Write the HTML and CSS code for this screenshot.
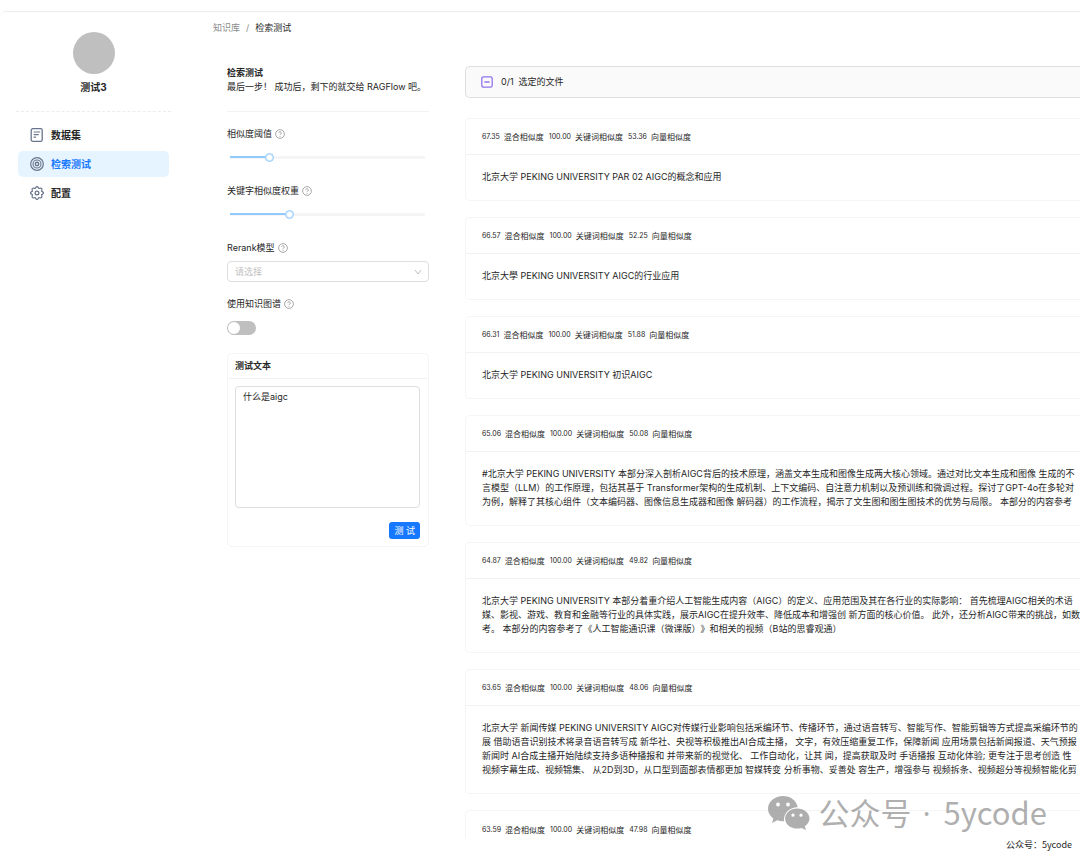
FILE: index.html
```
<!DOCTYPE html>
<html lang="zh-CN">
<head>
    <meta charset="UTF-8">
    <meta name="viewport" content="width=device-width, initial-scale=1.0">
    <title>检索测试 - RAGFlow</title>
    <link rel="stylesheet" href="styles.css">
</head>
<body>
    <svg class="sprite" aria-hidden="true">
        <symbol id="icon-help" viewBox="0 0 16 16">
            <circle cx="8" cy="8" r="7" fill="none" stroke="currentColor" stroke-width="1.2"/>
            <path d="M5.9 6.4a2.1 2 0 1 1 3.2 1.7c-.7.4-1.1.8-1.1 1.5" fill="none" stroke="currentColor" stroke-width="1.2"/>
            <circle cx="8" cy="11.6" r=".8" fill="currentColor"/>
        </symbol>
    </svg>

    <div class="app">
        <div class="topbar"></div>
        <div class="layout">
            <aside class="sidebar">
                <div class="avatar"></div>
                <h2 class="kb-name">测试3</h2>
                <nav class="menu">
                    <a href="#dataset" class="menu-item">
                        <svg viewBox="0 0 14 14" fill="none" stroke="currentColor" stroke-linecap="round">
                            <rect x="1.2" y=".7" width="11" height="12.6" rx="1.6" stroke-width="1.3"/>
                            <path d="M4.1 4h5.6M4.1 6.6h4.2M4.1 9.200h1.400" stroke-width="1.2"/>
                        </svg>
                        数据集
                    </a>
                    <a href="#testing" class="menu-item active">
                        <svg viewBox="0 0 14 14" fill="none" stroke="currentColor">
                            <circle cx="7" cy="7" r="6.3" stroke-width="1.2"/>
                            <circle cx="7" cy="7" r="4" stroke-width="1.1"/>
                            <circle cx="7" cy="7" r="1.700" stroke-width="1.4"/>
                        </svg>
                        检索测试
                    </a>
                    <a href="#config" class="menu-item">
                        <svg viewBox="0 0 14 14" fill="none" stroke="currentColor" stroke-linejoin="round">
                            <path d="M11.530 5.120Q15.400 7 11.530 8.880Q12.940 12.940 8.880 11.530Q7 15.400 5.120 11.530Q1.060 12.940 2.470 8.880Q-1.400 7 2.470 5.120Q1.060 1.060 5.120 2.470Q7-1.400 8.880 2.470Q12.940 1.060 11.530 5.120z" stroke-width="1.2"/>
                            <circle cx="7" cy="7" r="1.900" stroke-width="1.2"/>
                        </svg>
                        配置
                    </a>
                </nav>
            </aside>

            <main class="main">
                <nav class="breadcrumb">
                    <a href="#knowledge">知识库</a>
                    <span class="separator">/</span>
                    <span class="current">检索测试</span>
                </nav>

                <div class="content">
                    <form class="controls">
                        <h1 class="title">检索测试</h1>
                        <p class="intro">最后一步！ 成功后，剩下的就交给 RAGFlow 吧。</p>

                        <div class="form-item slider-item">
                            <label for="similarity">相似度阈值 <svg class="help"><use href="#icon-help"/></svg></label>
                            <input type="range" id="similarity" min="0" max="100" value="20" style="--value: 0.2">
                        </div>
                        <div class="form-item slider-item">
                            <label for="weight">关键字相似度权重 <svg class="help"><use href="#icon-help"/></svg></label>
                            <input type="range" id="weight" min="0" max="100" value="30" style="--value: 0.3">
                        </div>
                        <div class="form-item select-item">
                            <label for="rerank">Rerank模型 <svg class="help"><use href="#icon-help"/></svg></label>
                            <div class="select-box">
                                <select id="rerank">
                                    <option value="">请选择</option>
                                </select>
                                <svg class="arrow" viewBox="0 0 8 8" fill="none" stroke="currentColor"><path d="M1 2l3 4 3-4"/></svg>
                            </div>
                        </div>
                        <div class="form-item switch-item">
                            <label for="graph">使用知识图谱 <svg class="help"><use href="#icon-help"/></svg></label>
                            <input type="checkbox" id="graph" class="switch" role="switch">
                        </div>

                        <div class="test-card">
                            <label for="question" class="test-card-head">测试文本</label>
                            <div class="test-card-body">
                                <textarea id="question">什么是aigc</textarea>
                                <button type="button" class="btn-test">测 试</button>
                            </div>
                        </div>
                    </form>

                    <section class="results">
                        <button type="button" class="file-bar">
                            <svg viewBox="0 0 12 12" fill="none" stroke="currentColor">
                                <rect x=".8" y=".8" width="10.4" height="10.4" rx="1.8" stroke-width="1.3"/>
                                <path d="M3.4 6h5.2" stroke-width="1.3"/>
                            </svg>
                            <span>0/1</span>
                            <span>选定的文件</span>
                        </button>

                        <article class="chunk">
                            <header><b>67.35</b><span>混合相似度</span><b>100.00</b><span>关键词相似度</span><b>53.36</b><span>向量相似度</span></header>
                            <p>北京大学 PEKING UNIVERSITY PAR 02 AIGC的概念和应用</p>
                        </article>
                        <article class="chunk">
                            <header><b>66.57</b><span>混合相似度</span><b>100.00</b><span>关键词相似度</span><b>52.25</b><span>向量相似度</span></header>
                            <p>北京大學 PEKING UNIVERSITY AIGC的行业应用</p>
                        </article>
                        <article class="chunk">
                            <header><b>66.31</b><span>混合相似度</span><b>100.00</b><span>关键词相似度</span><b>51.88</b><span>向量相似度</span></header>
                            <p>北京大学 PEKING UNIVERSITY 初识AIGC</p>
                        </article>
                        <article class="chunk">
                            <header><b>65.06</b><span>混合相似度</span><b>100.00</b><span>关键词相似度</span><b>50.08</b><span>向量相似度</span></header>
                            <p>#北京大学 PEKING UNIVERSITY 本部分深入剖析AIGC背后的技术原理，涵盖文本生成和图像生成两大核心领域。通过对比文本生成和图像 生成的不<br>
                            言模型（LLM）的工作原理，包括其基于 Transformer架构的生成机制、上下文编码、自注意力机制以及预训练和微调过程。探讨了GPT-4o在多轮对<br>
                            为例，解释了其核心组件（文本编码器、图像信息生成器和图像 解码器）的工作流程，揭示了文生图和图生图技术的优势与局限。 本部分的内容参考</p>
                        </article>
                        <article class="chunk">
                            <header><b>64.87</b><span>混合相似度</span><b>100.00</b><span>关键词相似度</span><b>49.82</b><span>向量相似度</span></header>
                            <p>北京大学 PEKING UNIVERSITY 本部分着重介绍人工智能生成内容（AIGC）的定义、应用范围及其在各行业的实际影响： 首先梳理AIGC相关的术语<br>
                            媒、影视、游戏、教育和金融等行业的具体实践，展示AIGC在提升效率、降低成本和增强创 新方面的核心价值。 此外，还分析AIGC带来的挑战，如数<br>
                            考。 本部分的内容参考了《人工智能通识课（微课版）》和相关的视频（B站的思睿观通）</p>
                        </article>
                        <article class="chunk">
                            <header><b>63.65</b><span>混合相似度</span><b>100.00</b><span>关键词相似度</span><b>48.06</b><span>向量相似度</span></header>
                            <p>北京大学 新闻传媒 PEKING UNIVERSITY AIGC对传媒行业影响包括采编环节、传播环节，通过语音转写、智能写作、智能剪辑等方式提高采编环节的<br>
                            展 借助语音识别技术将录音语音转写成 新华社、央视等积极推出AI合成主播， 文字，有效压缩重复工作，保障新闻 应用场景包括新闻报道、天气预报<br>
                            新闻时 AI合成主播开始陆续支持多语种播报和 并带来新的视觉化、 工作自动化，让其 闻，提高获取及时 手语播报 互动化体验; 更专注于思考创造 性<br>
                            视频字幕生成、视频锦集、 从2D到3D，从口型到面部表情都更加 智媒转变 分析事物、妥善处 容生产，增强参与 视频拆条、视频超分等视频智能化剪</p>
                        </article>
                        <article class="chunk">
                            <header><b>63.59</b><span>混合相似度</span><b>100.00</b><span>关键词相似度</span><b>47.98</b><span>向量相似度</span></header>
                        </article>
                    </section>
                </div>
            </main>
        </div>

        <footer class="caption">公众号：5ycode</footer>

        <div class="watermark">
            <svg viewBox="0 0 42 34" fill="currentColor">
                <path fill-rule="evenodd" d="M15 0C6.700 0 0 5.700 0 12.800c0 4 2.100 7.500 5.400 9.800L4 27l5.300-2.700c1.700.6 3.700.9 5.700.9h1.100C15 18 21 11.300 29.700 11.200 28.700 4.800 22.500 0 15 0zM10 6.600a1.900 1.900 0 1 1 0 3.800 1.900 1.900 0 0 1 0-3.800zm10 0a1.900 1.900 0 1 1 0 3.800 1.900 1.900 0 0 1 0-3.800z"/>
                <path fill-rule="evenodd" d="M29.300 12.400c-6.800 0-12.200 4.500-12.200 10.100s5.400 10.100 12.200 10.100c1.500 0 2.900-.2 4.200-.6L38 34l-1.200-3.700c2.800-1.900 4.700-4.700 4.700-7.800 0-5.600-5.400-10.100-12.200-10.100zM25 17.600a1.600 1.600 0 1 1 0 3.200 1.600 1.600 0 0 1 0-3.200zm8 0a1.600 1.600 0 1 1 0 3.200 1.600 1.600 0 0 1 0-3.200z"/>
            </svg>
            <span>公众号 <span class="dot">·</span> 5ycode</span>
        </div>
    </div>
</body>
</html>
```

FILE: styles.css
```
* {
    margin: 0;
    padding: 0;
    box-sizing: border-box;
}

body {
    font-family: Inter, "Noto Sans CJK SC", sans-serif;
    font-size: 9px;
    line-height: 14px;
    text-spacing-trim: space-all;
    color: #262626;
    background: #fff;
}

input,
select,
textarea,
button {
    font: inherit;
    color: inherit;
}

a {
    color: inherit;
    text-decoration: none;
}

.sprite {
    position: absolute;
    width: 0;
    height: 0;
}

.app {
    position: relative;
    display: flex;
    flex-direction: column;
    height: 100vh;
    overflow: hidden;
}

.topbar {
    flex: none;
    height: 11px;
}

.layout {
    flex: 1;
    min-height: 0;
    display: flex;
    border-top: 1px solid #ededed;
    border-top-left-radius: 6px;
    overflow: hidden;
}

/* sidebar */
.sidebar {
    flex: none;
    width: 187px;
    padding: 20px 18px 0;
}

.avatar {
    width: 42px;
    height: 42px;
    margin: 0 auto;
    border-radius: 50%;
    background: #bfbfbf;
}

.kb-name {
    margin: 6px -2px 0;
    padding-bottom: 17px;
    border-bottom: 1px dashed #ececec;
    font-size: 10px;
    font-weight: 700;
    text-align: center;
}

.menu {
    display: flex;
    flex-direction: column;
    gap: 3px;
    margin-top: 10px;
}

.menu-item {
    display: flex;
    align-items: center;
    gap: 7px;
    height: 26px;
    padding-left: 12px;
    border-radius: 5px;
    font-size: 10px;
    font-weight: 700;
}

.menu-item svg {
    width: 14px;
    height: 14px;
    color: #69758c;
}

.menu-item.active {
    color: #1677ff;
    background: #e6f4ff;
}

/* main */
.main {
    flex: 1;
    min-width: 0;
    padding: 9px 0 0 26px;
}

.breadcrumb {
    display: flex;
    gap: 6px;
}

.breadcrumb a,
.breadcrumb .separator {
    color: #8c8c8c;
}

.content {
    display: flex;
    gap: 36px;
    margin-top: 31px;
    padding-left: 14px;
}

.controls {
    flex: none;
    width: 202px;
}

.title {
    font-size: 9px;
    font-weight: 700;
}

.intro {
    padding-bottom: 17px;
    border-bottom: 1px solid #f2f2f2;
    margin-bottom: 15px;
    white-space: nowrap;
}

.form-item label {
    display: flex;
    align-items: center;
    gap: 3px;
}

.help {
    width: 10px;
    height: 10px;
    color: #8c8c8c;
}

.slider-item {
    margin-bottom: 22px;
}

input[type="range"] {
    display: block;
    width: calc(100% + 2px);
    height: 9px;
    margin: 12px -1px 0;
    appearance: none;
    background: linear-gradient(#91caff, #91caff) 4px 3px / calc((100% - 9px) * var(--value)) 2px no-repeat,
        linear-gradient(#f5f5f5, #f5f5f5) 4px 3px / calc(100% - 9px) 3px no-repeat;
    cursor: pointer;
}

input[type="range"]::-webkit-slider-thumb {
    appearance: none;
    width: 9px;
    height: 9px;
    border: 1px solid #91caff;
    border-radius: 50%;
    background: #fff;
    box-shadow: inset 0 0 0 1px #d3eaff;
}

.select-item {
    margin-bottom: 15px;
}

.select-box {
    position: relative;
    margin-top: 6px;
}

.select-box select {
    display: block;
    width: 100%;
    height: 21px;
    padding: 0 7px;
    appearance: none;
    border: 1px solid #dedede;
    border-radius: 4px;
    background: #fff;
    color: #bfbfbf;
}

.arrow {
    position: absolute;
    top: 7px;
    right: 7px;
    width: 8px;
    height: 8px;
    color: #bfbfbf;
    pointer-events: none;
}

.switch {
    display: block;
    width: 29px;
    height: 14px;
    margin-top: 10px;
    padding: 1px;
    appearance: none;
    border-radius: 7px;
    background: #bfbfbf;
}

.switch::before {
    content: '';
    display: block;
    width: 12px;
    height: 12px;
    border-radius: 50%;
    background: #fff;
}

.switch:checked {
    background: #1677ff;
}

.switch:checked::before {
    margin-left: 15px;
}

.test-card {
    margin-top: 18px;
    border: 1px solid #f5f5f5;
    border-radius: 5px;
}

.test-card-head {
    display: block;
    padding: 5px 7px;
    border-bottom: 1px solid #f2f2f2;
    font-weight: 700;
}

.test-card-body {
    padding: 7px 8px 7px 7px;
}

textarea {
    display: block;
    width: 100%;
    height: 122px;
    padding: 3px 7px;
    border: 1px solid #dedede;
    border-radius: 4px;
    resize: none;
    outline: none;
}

.btn-test {
    display: block;
    height: 17px;
    margin: 14px 0 0 auto;
    padding: 0 5px;
    border: none;
    border-radius: 3px;
    background: #1677ff;
    color: #fff;
    cursor: pointer;
}

/* results */
.results {
    flex: 1;
    min-width: 0;
    display: flex;
    flex-direction: column;
    gap: 16px;
}

.file-bar {
    display: flex;
    align-items: center;
    gap: 5px;
    height: 32px;
    margin-bottom: 4px;
    padding-left: 15px;
    border: 1px solid #dedede;
    border-right: none;
    border-radius: 5px 0 0 5px;
    background: #fafafa;
}

.file-bar svg {
    width: 12px;
    height: 12px;
    margin-right: 3px;
    color: #9373ee;
}

.chunk {
    border: 1px solid #f5f5f5;
    border-right: none;
    border-radius: 5px 0 0 5px;
}

.chunk:last-child {
    border-bottom: none;
}

.chunk header {
    display: flex;
    align-items: center;
    height: 36px;
    padding: 1px 0 0 16px;
    border-bottom: 1px solid #f2f2f2;
    font-size: 8px;
}

.chunk header b {
    margin-right: 4px;
    font-size: 7px;
    font-weight: 400;
}

.chunk header span {
    margin-right: 5px;
}

.chunk p {
    padding: 15px 0 16px 16px;
    white-space: nowrap;
}

.chunk:last-child header {
    border-bottom: none;
}

.caption {
    flex: none;
    height: 20px;
    padding-right: 8px;
    font-family: "Noto Sans CJK SC", sans-serif;
    text-align: right;
}

.watermark {
    position: absolute;
    right: 33px;
    bottom: 25px;
    display: flex;
    align-items: center;
    gap: 8px;
    font-family: "Noto Sans CJK SC", sans-serif;
    font-size: 31px;
    line-height: 40px;
    color: rgba(140, 140, 140, 0.7);
    pointer-events: none;
}

.watermark .dot {
    margin: 0 6px 0 4px;
    font-family: "Open Sans", sans-serif;
}

.watermark svg {
    width: 42px;
    height: 34px;
}
```
